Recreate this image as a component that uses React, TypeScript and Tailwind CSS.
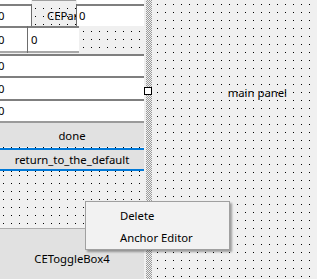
const font = { fontFamily: '"Noto Sans", "Open Sans", sans-serif' };

const grid =
  "bg-black bg-[linear-gradient(to_right,transparent_1px,#f0f0f0_1px),linear-gradient(to_bottom,transparent_1px,#f0f0f0_1px)] bg-[size:8px_8px]";

const dotRow = "h-px bg-[linear-gradient(to_right,#000_1px,transparent_1px)] bg-[size:8px_1px] bg-[position:3px_0]";

function Cell({ text = "0", shift = "-ml-[2px]", className = "" }: { text?: string; shift?: string; className?: string }) {
  return (
    <div className={`bg-white border-t-2 border-[#7f7f7f] overflow-hidden flex items-center ${className}`}>
      <span className={shift}>{text}</span>
    </div>
  );
}

export default function App() {
  return (
    <div className="w-[317px] h-[279px] overflow-hidden flex bg-[#f0f0f0] leading-none text-[11.3px] text-black relative" style={font}>
      {/* left designer panel */}
      <div className={`w-[144px] h-full overflow-hidden flex flex-col ${grid} bg-[position:3px_7px]`}>
        <div className="h-[26px] flex shrink-0">
          <div className="w-[31px] flex flex-col">
            <div className="h-[4px] bg-white" />
            <Cell className="flex-1" />
          </div>
          <div className="w-px bg-[#6d6d6d] mt-[4px]" />
          <div className={`w-[44px] border-t border-[#a0a0a0] overflow-hidden flex items-center pl-[15px] pt-[4px] ${grid} bg-[position:3px_7px]`}>
            <span className="whitespace-nowrap">CEPar</span>
          </div>
          <div className="w-px bg-[#6d6d6d] mt-[4px]" />
          <div className="flex-1 flex flex-col">
            <div className="h-[4px] bg-white" />
            <Cell className="flex-1" shift="ml-[2px]" />
          </div>
        </div>

        <div className="h-[28px] flex shrink-0">
          <Cell className="w-[27px] h-[27px] border-b-2 border-b-[#a8a8a8]" />
          <div className="w-px h-[27px] bg-[#6d6d6d]" />
          <Cell className="w-[51px] h-[27px] border-b-2 border-b-[#a8a8a8]" shift="ml-[3px]" />
        </div>

        <Cell className="h-[22px] shrink-0" />
        <Cell className="h-[23px] shrink-0" />
        <Cell className="h-[22px] shrink-0" />

        <div className="h-[26px] shrink-0 bg-[#e1e1e1] border-t-2 border-[#9a9a9a] flex items-center justify-center pt-px">
          done
        </div>
        <div className={dotRow} />
        <div className="h-[23px] shrink-0 bg-[#e1e1e1] border-y-2 border-[#0078d7] flex items-center justify-center">
          return_to_the_default
        </div>
        <div className={dotRow} />

        <div className="flex-1" />

        <div className="h-[60px] shrink-0 mb-[-9px] bg-[#e1e1e1] border-t border-[#adadad] flex items-center justify-center">
          CEToggleBox4
        </div>
      </div>

      {/* splitter */}
      <div className="w-[2px] h-full" />
      <div className="w-[6px] h-full bg-[repeating-conic-gradient(#9a9a9a_0_25%,#f0f0f0_0_50%)] bg-[size:2px_2px]" />

      {/* main panel */}
      <div className={`flex-1 h-full flex items-start justify-end pt-[87px] pr-[30px] ${grid} bg-[position:5px_4px]`}>
        <span className="whitespace-nowrap">main panel</span>
      </div>

      {/* selection handle */}
      <div className="absolute left-[144px] top-[87px] w-[8px] h-[8px] bg-white border border-black" />

      {/* context menu */}
      <div className="absolute left-[85px] top-[201px] w-[145px] h-[49px] bg-[#f2f2f2] border border-[#a0a0a0] shadow-[2px_2px_2px_rgba(0,0,0,0.35)] flex flex-col gap-[11px] pl-[34px] pt-[8px]">
        <span>Delete</span>
        <span className="whitespace-nowrap">Anchor Editor</span>
      </div>
    </div>
  );
}
